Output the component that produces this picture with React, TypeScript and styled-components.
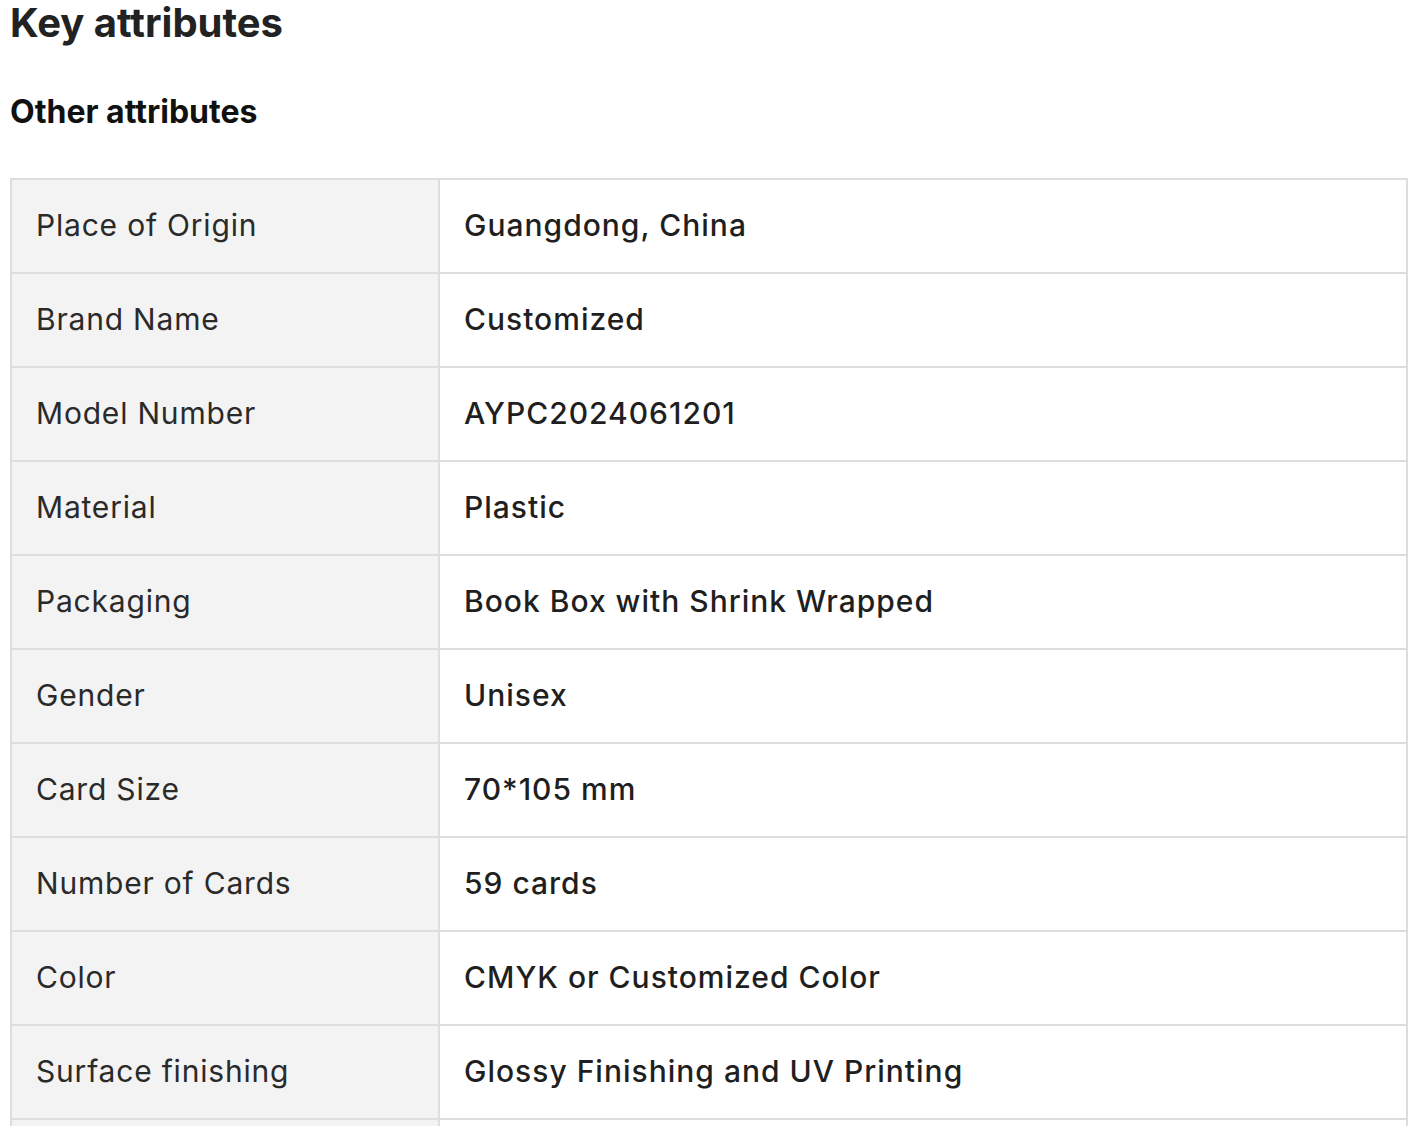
import styled, { createGlobalStyle } from "styled-components";

const GlobalStyle = createGlobalStyle`
  body {
    margin: 0;
    background: #fff;
    font-family: Inter, "Noto Sans", sans-serif;
    color: #222;
  }
`;

const Page = styled.div`
  padding: 0 10px;
`;

const Title = styled.h2`
  margin: 0;
  font-size: 40px;
  line-height: 46px;
  font-weight: 700;
  color: #222;
`;

const SubTitle = styled.h3`
  margin: 44px 0 0;
  font-size: 32px;
  line-height: 44px;
  font-weight: 700;
  color: #111;
`;

const Table = styled.table`
  margin-top: 44px;
  width: 100%;
  border-collapse: collapse;
  border: 2px solid #ddd;
`;

const Row = styled.tr`
  border-bottom: 2px solid #ddd;
`;

const Cell = styled.td<{ $label?: boolean }>`
  height: 94px;
  padding: 0 24px 3px;
  box-sizing: border-box;
  font-size: 30px;
  line-height: 44px;
  vertical-align: middle;
  font-weight: ${(p) => (p.$label ? 400 : 500)};
  letter-spacing: ${(p) => (p.$label ? "0.8px" : "1px")};
  color: ${(p) => (p.$label ? "#2a2a2a" : "#1f1f1f")};
  background: ${(p) => (p.$label ? "#f3f3f3" : "#fff")};
  width: ${(p) => (p.$label ? "428px" : "auto")};
  border-right: 2px solid #ddd;
`;

const attributes: [string, string][] = [
  ["Place of Origin", "Guangdong, China"],
  ["Brand Name", "Customized"],
  ["Model Number", "AYPC2024061201"],
  ["Material", "Plastic"],
  ["Packaging", "Book Box with Shrink Wrapped"],
  ["Gender", "Unisex"],
  ["Card Size", "70*105 mm"],
  ["Number of Cards", "59 cards"],
  ["Color", "CMYK or Customized Color"],
  ["Surface finishing", "Glossy Finishing and UV Printing"],
  ["Usage", "Game Playing"],
];

function App() {
  return (
    <Page>
      <GlobalStyle />
      <Title>Key attributes</Title>
      <SubTitle>Other attributes</SubTitle>
      <Table>
        <tbody>
          {attributes.map(([label, value]) => (
            <Row key={label}>
              <Cell $label>{label}</Cell>
              <Cell>{value}</Cell>
            </Row>
          ))}
        </tbody>
      </Table>
    </Page>
  );
}

export default App;
